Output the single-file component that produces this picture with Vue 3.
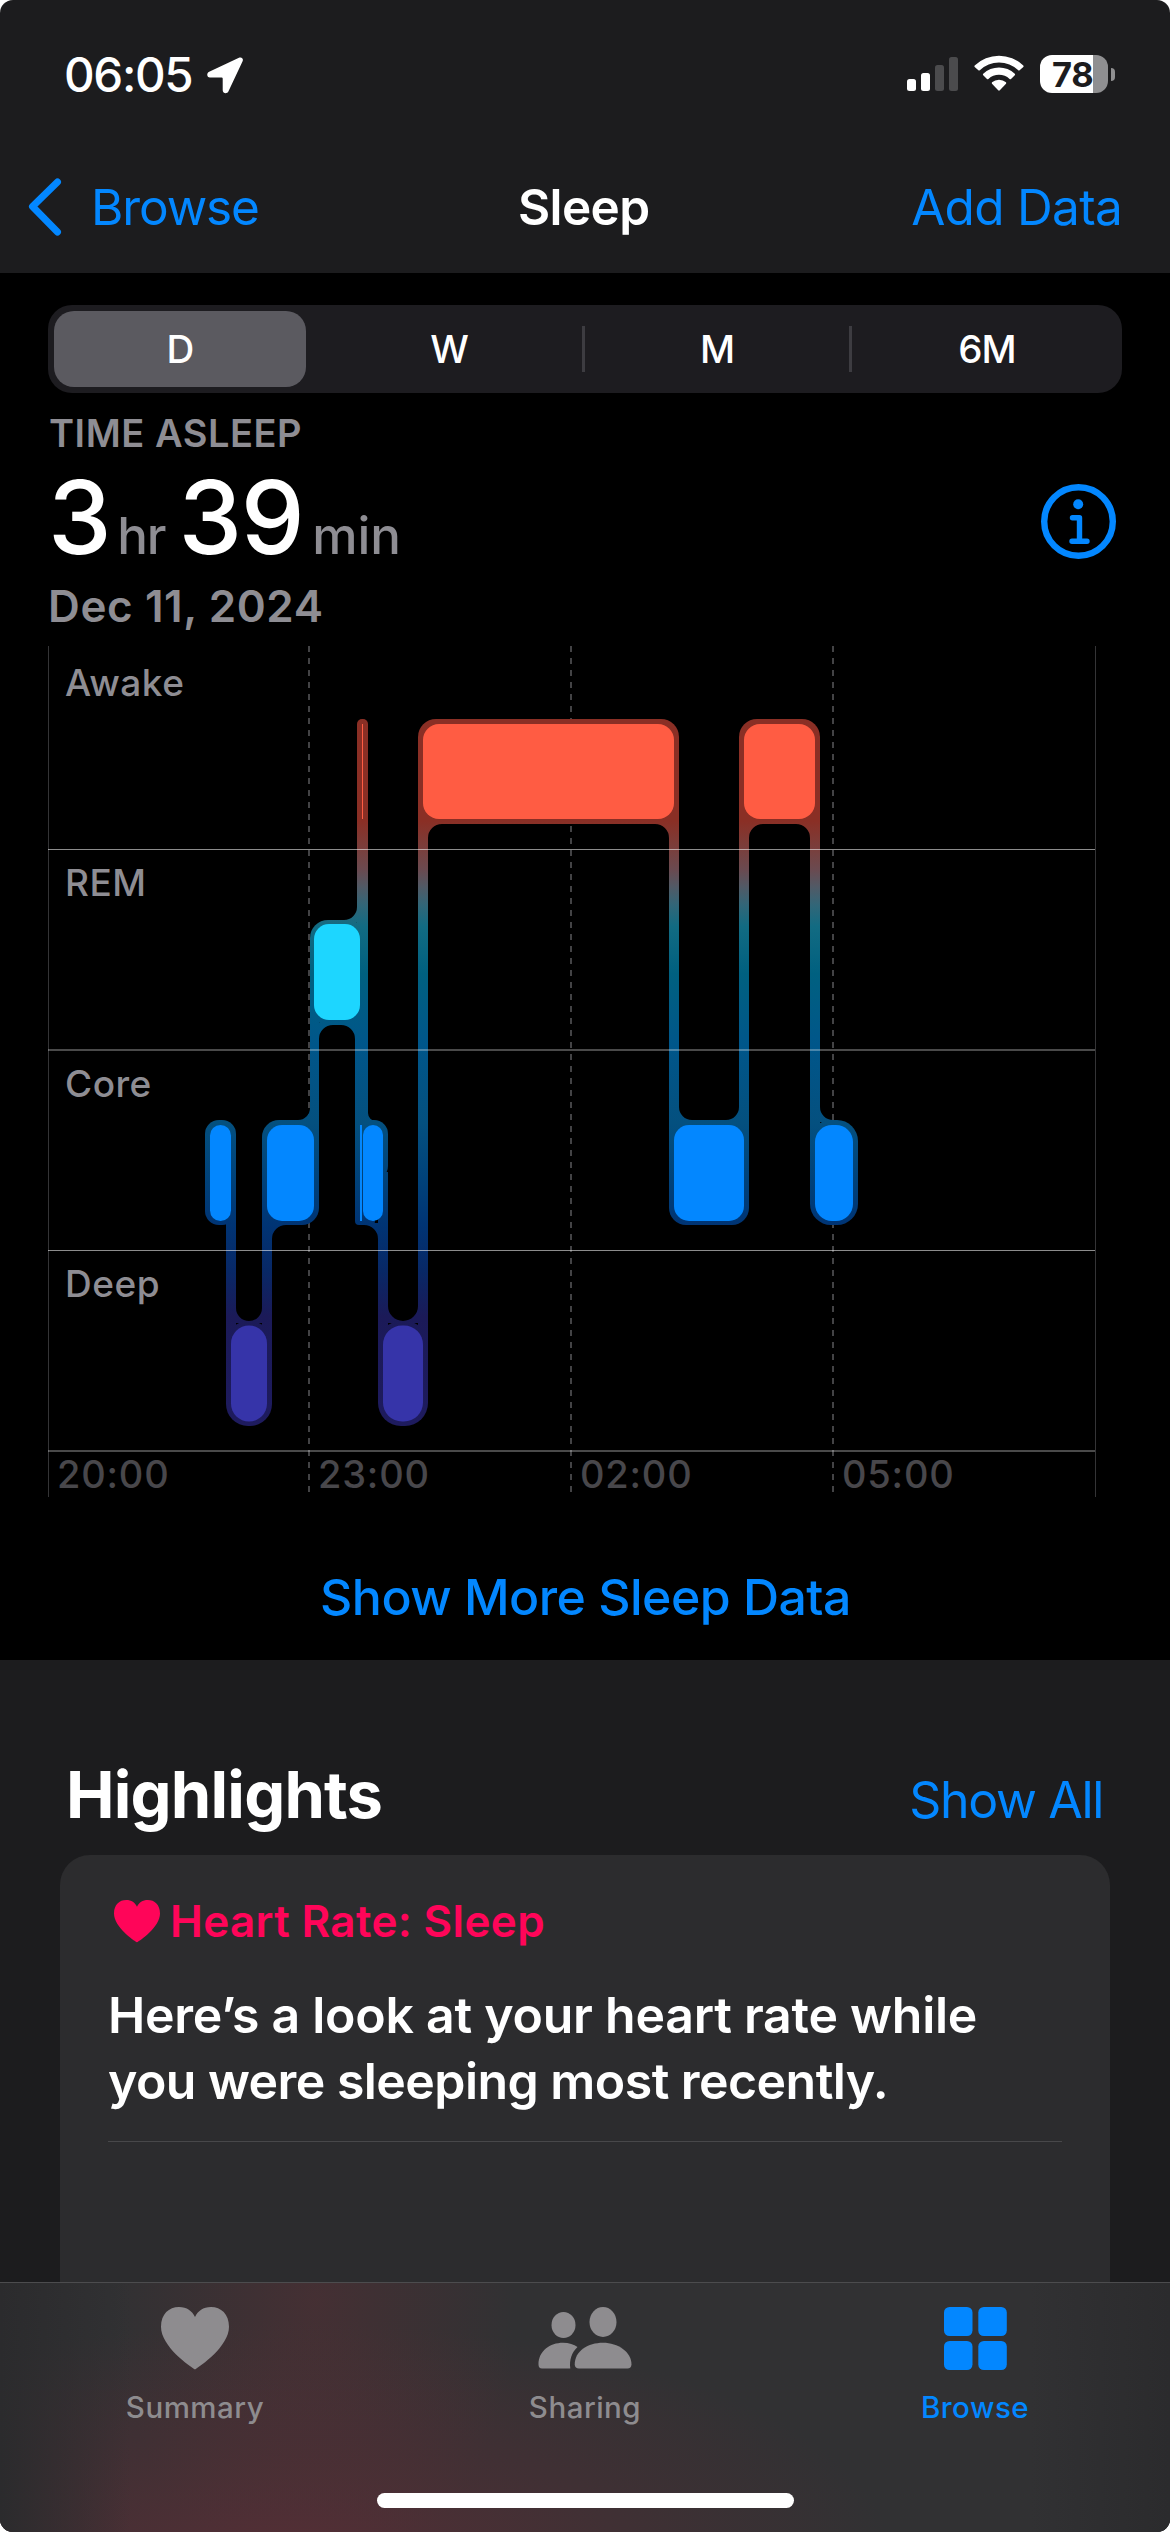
<script setup>
const ranges = ['D', 'W', 'M', '6M']

// Vertical bands of each sleep stage on the chart
const stages = [
  { name: 'Awake', label: 682 },
  { name: 'REM', label: 882 },
  { name: 'Core', label: 1083 },
  { name: 'Deep', label: 1283.5 },
]

const hours = [
  { text: '20:00', x: 57 },
  { text: '23:00', x: 318 },
  { text: '02:00', x: 580 },
  { text: '05:00', x: 842 },
]

const blocks = [
  { x: 362, w: 1, y: 724, h: 95, r: 0, fill: '#ff5c43' },
  { x: 423, w: 251, y: 724, h: 95, r: 16, fill: '#ff5c43' },
  { x: 744, w: 71, y: 724, h: 95, r: 16, fill: '#ff5c43' },
  { x: 314, w: 46, y: 924, h: 96, r: 15, fill: '#1dd6ff' },
  { x: 210, w: 21, y: 1125, h: 96, r: 10.5, fill: '#0387ff' },
  { x: 267, w: 47, y: 1125, h: 96, r: 15, fill: '#0387ff' },
  { x: 360, w: 2, y: 1125, h: 96, r: 0, fill: '#0387ff' },
  { x: 363, w: 20, y: 1125, h: 96, r: 10, fill: '#0387ff' },
  { x: 674, w: 70, y: 1125, h: 96, r: 15, fill: '#0387ff' },
  { x: 815, w: 38, y: 1125, h: 96, r: 17, fill: '#0387ff' },
  { x: 231, w: 36, y: 1325.5, h: 96, r: 18, fill: '#3634a9' },
  { x: 383, w: 40, y: 1325.5, h: 96, r: 19, fill: '#3634a9' },
]

// Dim envelope behind the blocks: [x, y, width, height, radius]
const shells = [
  [357, 719, 11, 105, 5], [418, 719, 261, 105, 18], [739, 719, 81, 105, 18],
  [310, 920, 56, 105, 18],
  [205, 1120, 31, 105, 14], [262, 1120, 57, 105, 17], [355, 1120, 20, 105, 4],
  [357, 1120, 31, 60, 14], [669, 1120, 80, 105, 17], [810, 1120, 48, 105, 21],
  [226, 1321, 46, 105, 22], [378, 1321, 50, 105, 23],
]

// Vertical connectors between stages: [x, top, width, bottom]
const links = [
  [226, 1172, 10, 1390], [262, 1172, 10, 1390], [310, 970, 9, 1170],
  [357, 770, 11, 1172], [355, 970, 13, 1180], [378, 1172, 10, 1390],
  [418, 770, 10, 1390], [669, 770, 10, 1172], [739, 770, 10, 1172], [810, 770, 10, 1172],
]

// Concave corners: [x, y, horizontal direction, vertical direction, radius]
const corners = [
  [236, 1321, 1, -1, 13], [262, 1321, -1, -1, 13],
  [272, 1225, 1, 1, 14], [310, 1120, -1, -1, 12],
  [319, 1025, 1, 1, 14], [355, 1025, -1, 1, 14], [357, 920, -1, -1, 13],
  [368, 1121, 1, -1, 8], [378, 1225, -1, 1, 14],
  [388, 1321, 1, -1, 15], [418, 1321, -1, -1, 15],
  [428, 824, 1, 1, 14], [669, 824, -1, 1, 14],
  [679, 1120, 1, -1, 13], [739, 1120, -1, -1, 13],
  [749, 824, 1, 1, 14], [810, 824, -1, 1, 14], [820, 1120, 1, -1, 13],
]

const cornerPath = ([x, y, sx, sy, r]) =>
  `M${x - sx * 2} ${y - sy * 2}H${x + sx * r}V${y}A${r} ${r} 0 0 ${sx * sy > 0 ? 0 : 1} ${x} ${y + sy * r}H${x - sx * 2}Z`

const envelope = [
  ...shells.map(([x, y, w, h, r]) =>
    `M${x + r} ${y}h${w - 2 * r}a${r} ${r} 0 0 1 ${r} ${r}v${h - 2 * r}a${r} ${r} 0 0 1 ${-r} ${r}h${-(w - 2 * r)}a${r} ${r} 0 0 1 ${-r} ${-r}v${-(h - 2 * r)}a${r} ${r} 0 0 1 ${r} ${-r}z`),
  ...links.map(([x, y, w, b]) => `M${x} ${y}h${w}V${b}h${-w}z`),
]
const heart = 'M34 63C29 60 0 40 0 20C0 7 8 0 18 0C26 0 31 4 34 10C37 4 42 0 50 0C60 0 68 7 68 20C68 40 39 60 34 63Z'
</script>

<template>
  <div class="screen">
    <header class="top">
      <div class="status">
        <span class="clock">06:05</span>
        <svg class="arrow" width="37" height="37" viewBox="0 0 37 37"><path d="M32.5 .6 2.2 14.7C-.8 16.2-.2 20.4 3 20.5H14.6Q15.7 20.5 15.7 21.6V33.3C15.8 36.7 20 37.4 21.5 34.3L35.6 4.2C36.7 1.7 34.6-.3 32.5 .6Z" fill="#fff" /></svg>
        <svg class="signal" width="51" height="34" viewBox="0 0 51 34">
          <rect x="0" y="22" width="9" height="12" rx="2.5" fill="#fff" /><rect x="14" y="16" width="9" height="18" rx="2.5" fill="#fff" />
          <rect x="28" y="8" width="9" height="26" rx="2.5" fill="#4b4b4d" /><rect x="42" y="0" width="9" height="34" rx="2.5" fill="#4b4b4d" />
        </svg>
        <svg class="wifi" width="50" height="36" viewBox="0 0 50 36">
          <g fill="#fff"><path d="M.7 10.5A35 35 0 0 1 49.300 10.500Q50 11.300 49.300 12L45.600 15.300Q44.900 15.900 44.200 15.200A27.700 27.700 0 0 0 5.800 15.200Q5.100 15.900 4.400 15.300L.7 12Q0 11.300 .7 10.500Z" />
            <path d="M9.200 18.700A23 23 0 0 1 40.800 18.700Q41.500 19.500 40.800 20.200L37 24Q36.300 24.600 35.600 24A15.600 15.600 0 0 0 14.400 24Q13.700 24.600 13 24L9.200 20.200Q8.500 19.500 9.200 18.700Z" />
            <path d="M18 27.300A10.500 10.500 0 0 1 32 27.300Q32.500 28 32 28.700L25.800 35.300Q25 36 24.200 35.300L18 28.700Q17.500 28 18 27.300Z" /></g>
        </svg>
        <div class="battery"><span>78</span></div>
        <i class="battery-tip"></i>
      </div>
      <nav class="nav">
        <span class="back"><svg width="34" height="58" viewBox="0 0 34 58"><path d="M29.500 4 4.500 28.500 29.500 54" fill="none" stroke="#0387ff" stroke-width="7" stroke-linecap="round" stroke-linejoin="round" /></svg>Browse</span>
        <span class="title">Sleep</span>
        <span class="add">Add Data</span>
      </nav>
    </header>

    <main class="sleep">
      <div class="segments">
        <div v-for="(r, i) in ranges" :key="r" class="segment" :class="{ on: i === 0, ruled: i > 1 }"><span>{{ r }}</span></div>
      </div>
      <div class="caption">TIME ASLEEP</div>
      <div class="total">
        <div class="amount"><b>3</b><span class="hr">hr</span><b class="mins">39</b><span class="min">min</span></div>
        <svg width="75" height="75" viewBox="0 0 75 75">
          <circle cx="37.500" cy="37.500" r="34.300" fill="none" stroke="#0387ff" stroke-width="6.400" />
          <circle cx="37.200" cy="20.300" r="5" fill="#0387ff" />
          <path d="M31.500 33.800H38.500V57M31 57.200H46" fill="none" stroke="#0387ff" stroke-width="5.400" stroke-linecap="round" stroke-linejoin="round" />
        </svg>
      </div>
      <div class="date">Dec 11, 2024</div>

      <svg class="chart" width="1170" height="860" viewBox="0 640 1170 860">
        <defs>
          <linearGradient id="depth" gradientUnits="userSpaceOnUse" x1="0" y1="720" x2="0" y2="1426">
            <stop offset="0" stop-color="#8a2f25" /><stop offset=".143" stop-color="#8a2f25" />
            <stop offset=".185" stop-color="#78403e" /><stop offset=".212" stop-color="#6a4a50" />
            <stop offset=".237" stop-color="#505a66" /><stop offset=".262" stop-color="#326678" />
            <stop offset=".292" stop-color="#126b82" />
            <stop offset=".36" stop-color="#006080" /><stop offset=".46" stop-color="#00568a" />
            <stop offset=".57" stop-color="#04507f" /><stop offset=".65" stop-color="#00427a" />
            <stop offset=".715" stop-color="#003474" /><stop offset=".78" stop-color="#082866" />
            <stop offset=".845" stop-color="#1b1a58" /><stop offset="1" stop-color="#1e1b5e" />
          </linearGradient>
        </defs>
        <g stroke="#343436" fill="none">
          <path d="M48.500 646V1497M1095.500 646V1497" stroke-width="1" />
          <path d="M309 646V1497M571 646V1497M833 646V1497" stroke="#434345" stroke-width="2" stroke-dasharray="6 6" />
        </g>
        <g fill="url(#depth)">
          <path v-for="(d, i) in envelope" :key="'e' + i" :d="d" />
          <path v-for="(c, i) in corners" :key="'c' + i" :d="cornerPath(c)" />
        </g>
        <rect v-for="(b, i) in blocks" :key="'b' + i" :x="b.x" :y="b.y" :width="b.w" :height="b.h" :rx="b.r" :fill="b.fill" />
        <g fill="#fff">
          <path d="M48 849H1095v1H48zM48 1250H1095v1H48z" fill-opacity=".55" />
          <path d="M48 1049H1095v2H48zM48 1450H1095v2H48z" fill-opacity=".29" />
        </g>
        <g class="stage-labels"><text v-for="s in stages" :key="s.name" x="65" :y="s.label + 13.500">{{ s.name }}</text></g>
        <g class="hour-labels"><text v-for="h in hours" :key="h.text" :x="h.x" y="1488">{{ h.text }}</text></g>
      </svg>
      <div class="more">Show More Sleep Data</div>
    </main>

    <section class="highlights">
      <div class="heading"><h2>Highlights</h2><span>Show All</span></div>
      <article class="card">
        <div class="kind"><svg width="46" height="43" viewBox="0 0 68 64" preserveAspectRatio="none"><path :d="heart" fill="#ff0559" /></svg>Heart Rate: Sleep</div>
        <p><span class="line1">Here’s a look at your heart rate while</span><br><span class="line2">you were sleeping most recently.</span></p>
        <hr>
      </article>
    </section>

    <footer class="tabs">
      <div class="row">
        <div class="tab"><svg width="68" height="63" viewBox="0 0 68 63.500" preserveAspectRatio="none"><path :d="heart" fill="#8e8c8f" /></svg><span>Summary</span></div>
        <div class="tab">
          <svg width="94" height="63" viewBox="0 0 94 63" fill="#8e8c8f">
            <ellipse cx="25.500" cy="18" rx="12" ry="13" /><ellipse cx="65" cy="15" rx="13.500" ry="15" />
            <path d="M4 61.500Q.5 61.500 .5 57.500C.5 44 12 35.800 25 35.800C31 35.800 36 37.500 39.500 40C33.500 45.500 31.300 53 32.300 61.500Z" />
            <path d="M41 61.500Q37 61.500 36.700 57.500C36.700 44 50 35.800 65 35.800C80 35.800 93.500 45 93.500 57.500Q93.200 61.500 89.500 61.500Z" />
          </svg><span>Sharing</span>
        </div>
        <div class="tab active">
          <svg width="63" height="63" viewBox="0 0 63 63" fill="#0387ff"><rect width="28.500" height="29" rx="5.500" /><rect x="34.300" width="28.500" height="29" rx="5.500" /><rect y="34" width="28.500" height="29" rx="5.500" /><rect x="34.300" y="34" width="28.500" height="29" rx="5.500" /></svg>
          <span>Browse</span>
        </div>
      </div>
      <i class="home"></i>
    </footer>
  </div>
</template>

<style>
body { background: #fff; }
</style>
<style scoped>
* { box-sizing: border-box; }
svg { display: block; flex: none; }
.screen { width: 1170px; height: 2532px; display: flex; flex-direction: column; overflow: hidden; border-radius: 13px; background: #1c1c1e; color: #fff; font-family: Inter, "Liberation Sans", sans-serif; white-space: nowrap; }
.top { height: 273px; flex: none; }
.status { height: 148px; display: flex; align-items: center; padding: 0 55px 0 64px; }
.clock { font-size: 47.500px; font-weight: 550; letter-spacing: -1.350px; line-height: 60px; width: 143px; margin-top: 1px; }
.arrow { margin-top: 2px; }
.signal { margin-left: auto; }
.wifi { margin: -2px 16px 0 16px; }
.battery { width: 68px; height: 38px; border-radius: 12px; background: linear-gradient(90deg, #fff 53px, #8f8f91 53px); color: #1c1c1e; font-size: 34.500px; font-weight: 650; line-height: 39px; padding-left: 12px; letter-spacing: -.3px; }
.battery-tip { width: 4px; height: 13px; margin-left: 3px; border-radius: 0 4px 4px 0; background: #8f8f91; }
.nav { height: 118px; display: grid; grid-template-columns: 1fr 132px 1fr; align-items: center; padding: 0 48px 0 28px; font-size: 49.500px; line-height: 60px; }
.back { display: flex; align-items: center; gap: 29px; color: #0387ff; letter-spacing: -1.100px; }
.title { font-weight: 600; letter-spacing: -.6px; padding-left: 9px; }
.add { color: #0387ff; text-align: right; letter-spacing: -.700px; }
.sleep { height: 1387px; flex: none; background: #000; padding-top: 32px; }
.segments { height: 88px; margin: 0 48px; padding: 6px; border-radius: 24px; background: #1d1c20; display: grid; grid-template-columns: 252px 276px 267px 267px; }
.segment { display: flex; align-items: center; justify-content: center; font-size: 38.500px; font-weight: 500; }
.segment span { letter-spacing: -1px; }
.segment:nth-child(2) { padding-left: 10px; }
.segment:nth-child(3) { padding-left: 3px; }
.segment:nth-child(4) { padding-left: 9px; }
.on { border-radius: 20px; background: #5b5a60; }
.ruled { background: linear-gradient(#3d3c41, #3d3c41) 0 50% / 3px 46px no-repeat; }
.caption { margin: 18px 0 0 49px; font-size: 38px; font-weight: 600; line-height: 45px; letter-spacing: .530px; color: #8e8d93; }
.total { height: 85px; margin: 19px 54px 0 48px; display: flex; justify-content: space-between; }
.amount { display: flex; align-items: baseline; line-height: 85px; }
.amount b { font-size: 101.500px; font-weight: 500; letter-spacing: -1.500px; }
.amount span { font-size: 51px; font-weight: 550; color: #8e8d93; }
.hr { margin-left: 7px; letter-spacing: -1px; }
.amount b.mins { margin-left: 13px; }
.min { margin-left: 9px; letter-spacing: 0; }
.total > svg { margin-top: 9px; }
.date { margin: 20px 0 0 48px; font-size: 44px; font-weight: 600; line-height: 52px; letter-spacing: .6px; color: #8e8d93; }
.chart { margin-top: 8px; }
.stage-labels { fill: #8e8d93; font-size: 37px; font-weight: 500; letter-spacing: .5px; }
.hour-labels { fill: #48474b; font-size: 38px; font-weight: 500; letter-spacing: .8px; }
.more { margin-top: 67px; padding-left: 1px; line-height: 60px; text-align: center; font-size: 50px; font-weight: 500; letter-spacing: -.530px; color: #0387ff; }
.highlights { flex: 1; min-height: 0; display: flex; flex-direction: column; padding: 95px 60px 0; }
.heading { height: 100px; display: flex; justify-content: space-between; align-items: baseline; padding: 0 7px 0 6px; line-height: 80px; }
.heading h2 { margin: 0; font-size: 65px; font-weight: 700; letter-spacing: -.800px; }
.heading span { font-size: 50px; letter-spacing: -1.330px; color: #0387ff; }
.card { flex: 1; border-radius: 30px 30px 0 0; background: #2c2c2e; padding: 39px 48px 0; }
.kind { height: 54px; display: flex; align-items: center; gap: 10px; padding-left: 6px; font-size: 44px; font-weight: 600; letter-spacing: .350px; color: #ff0559; }
.card p { margin: 34px 0 0; line-height: 66px; font-size: 50px; font-weight: 600; }
.line1 { letter-spacing: -.250px; }
.line2 { letter-spacing: -.550px; }
.card hr { height: 1px; border: 0; margin: 27px 0 0; background: #48484a; }
.tabs { height: 250px; flex: none; border-top: 1px solid #4c4c4e; display: flex; flex-direction: column; align-items: center; background:
  linear-gradient(90deg, #2b2b2d, transparent 130px, transparent 1030px, #2b2b2d),
  radial-gradient(ellipse 600px 230px at 290px 270px, rgba(92, 46, 54, .8), rgba(92, 46, 54, .42) 45%, rgba(92, 46, 54, 0)),
  radial-gradient(ellipse 200px 280px at 315px 20px, rgba(90, 46, 52, .48), rgba(90, 46, 52, 0)),
  #313133; }
.row { width: 100%; display: grid; grid-template-columns: repeat(3, 1fr); padding-top: 24px; height: 210px; align-content: start; }
.tab { display: flex; flex-direction: column; align-items: center; color: #8e8c8f; font-size: 29.500px; font-weight: 500; line-height: 36px; letter-spacing: .5px; }
.tab span { margin-top: 19px; }
.tab.active { color: #0387ff; }
.home { width: 417px; height: 15px; border-radius: 8px; background: #fff; }
</style>
